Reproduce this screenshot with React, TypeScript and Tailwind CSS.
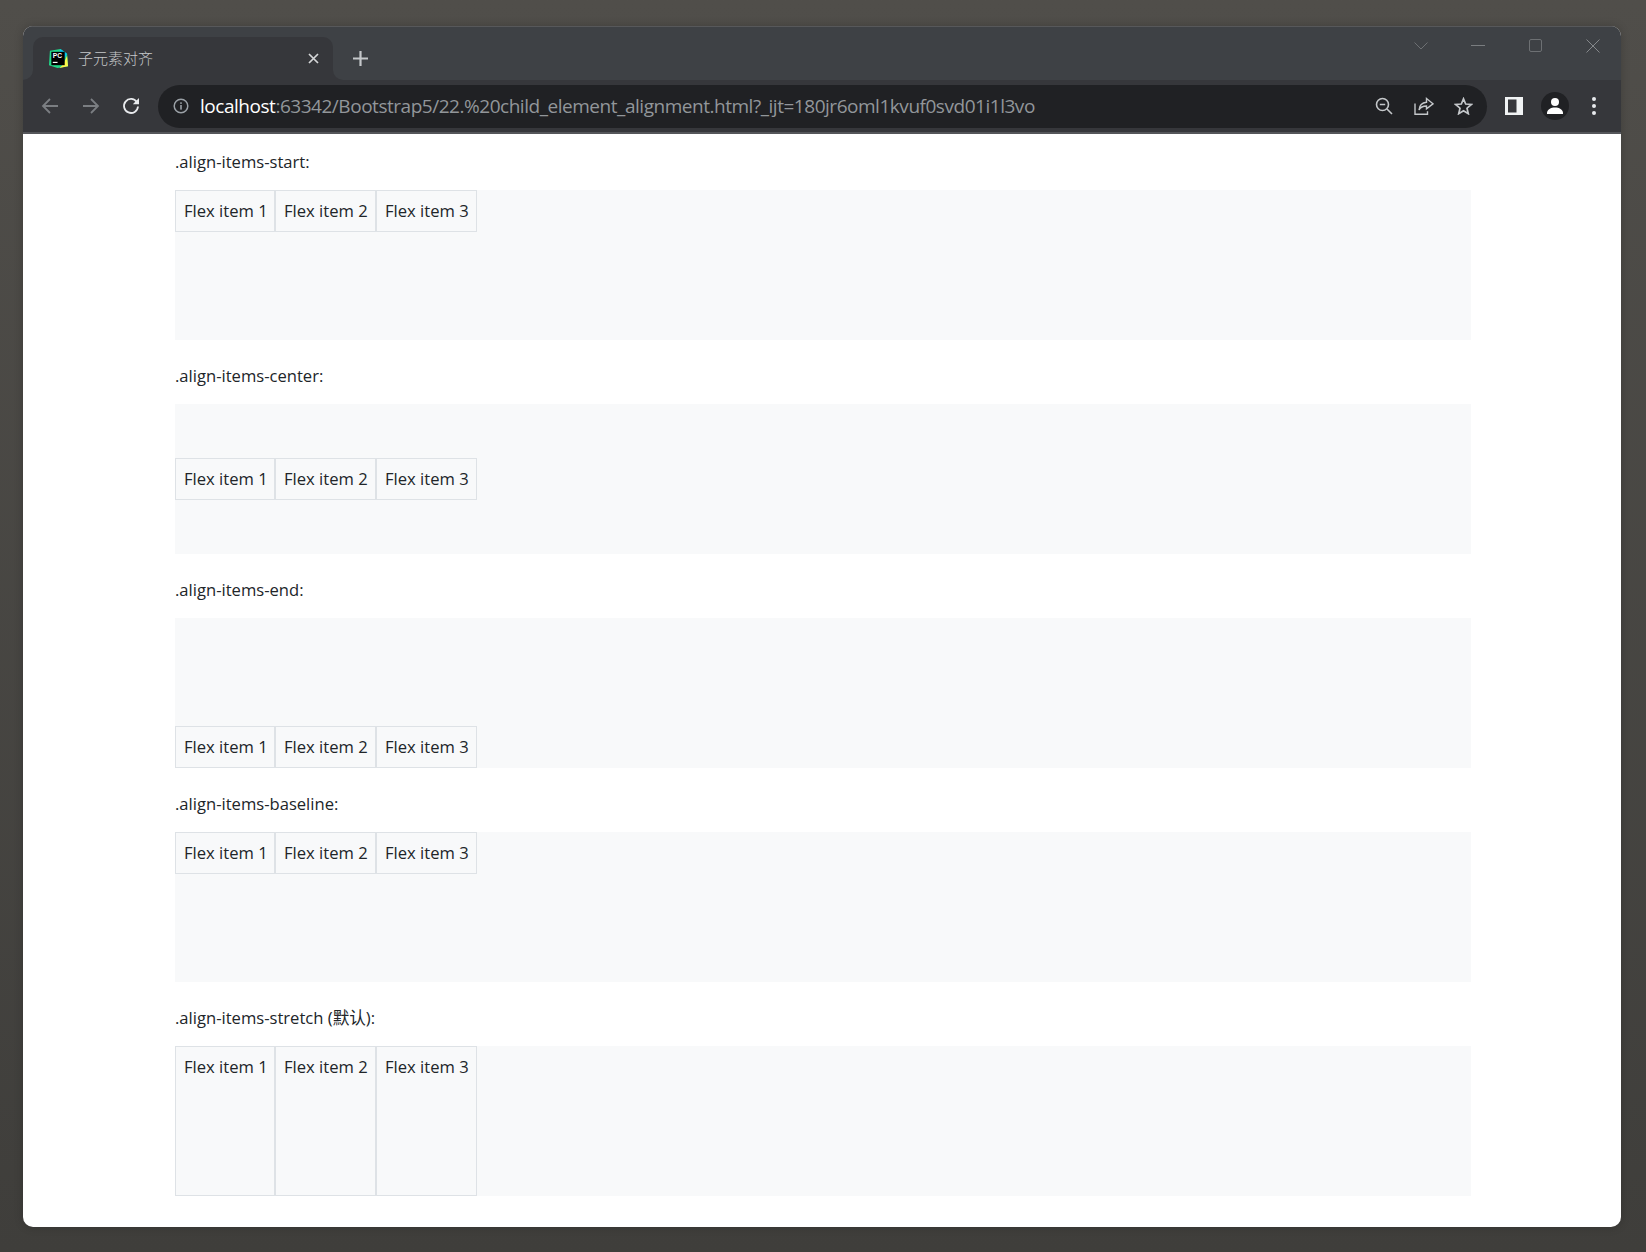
const items = ["Flex item 1", "Flex item 2", "Flex item 3"];

function FlexBox({ align }: { align: string }) {
  return (
    <div className={`mb-[23px] flex h-[150px] bg-[#f8f9fa] ${align}`}>
      <div className="w-[100px] border border-[#dee2e6] bg-[#f8f9fa] py-[7px] pl-[8px] leading-[26px] text-[#212529]">{items[0]}</div>
      <div className="w-[101px] border border-[#dee2e6] bg-[#f8f9fa] py-[7px] pl-[8px] leading-[26px] text-[#212529]">{items[1]}</div>
      <div className="w-[101px] border border-[#dee2e6] bg-[#f8f9fa] py-[7px] pl-[8px] leading-[26px] text-[#212529]">{items[2]}</div>
    </div>
  );
}

function Section({ label, align }: { label: string; align: string }) {
  return (
    <div>
      <p className="mb-[15px] h-[26px] leading-[26px] text-[#212529]">{label}</p>
      <FlexBox align={align} />
    </div>
  );
}

function PyCharmLogo() {
  return (
    <svg width="21" height="21" viewBox="0 0 22 22" className="shrink-0">
      <path d="M2 3 L13 1 L20 6 L21 19 L10 21 L1 18 Z" fill="#21d789" />
      <path d="M13 1 L20 6 L18 10 L12 5 Z" fill="#07c3f2" />
      <path d="M20 8 L21 19 L12 21 L16 17 Z" fill="#fcf84a" />
      <rect x="3.5" y="4" width="14" height="14" fill="#000" />
      <text x="5" y="10.5" fontSize="7" fontWeight="700" fill="#fff" fontFamily="'Liberation Sans', sans-serif">PC</text>
      <rect x="5" y="14.5" width="5" height="1.2" fill="#fff" />
    </svg>
  );
}

function Back() {
  return (
    <svg width="18" height="18" viewBox="0 0 18 18" fill="none" stroke="#7b7e82" strokeWidth="1.8">
      <path d="M17 9H2M9 2 2 9l7 7" />
    </svg>
  );
}

function Forward() {
  return (
    <svg width="18" height="18" viewBox="0 0 18 18" fill="none" stroke="#7b7e82" strokeWidth="1.8">
      <path d="M1 9h15M9 2l7 7-7 7" />
    </svg>
  );
}

function Reload() {
  return (
    <svg width="18" height="18" viewBox="0 0 18 18" fill="none">
      <path d="M14.8 5A7 7 0 1 0 16 9.5" stroke="#e8eaed" strokeWidth="1.8" />
      <path d="M17 1v6.2h-6.2z" fill="#e8eaed" />
    </svg>
  );
}

function Info() {
  return (
    <svg width="16" height="16" viewBox="0 0 16 16" fill="none">
      <circle cx="8" cy="8" r="6.8" stroke="#9aa0a6" strokeWidth="1.5" />
      <rect x="7.2" y="7" width="1.6" height="4.6" fill="#9aa0a6" />
      <rect x="7.2" y="4.3" width="1.6" height="1.6" fill="#9aa0a6" />
    </svg>
  );
}

function ZoomOut() {
  return (
    <svg width="18" height="18" viewBox="0 0 18 18" fill="none" stroke="#c4c7ca" strokeWidth="1.6">
      <circle cx="7.5" cy="7.5" r="6" />
      <path d="M4.8 7.5h5.4M12 12l5 5" />
    </svg>
  );
}

function Share() {
  return (
    <svg width="20" height="18" viewBox="0 0 20 18" fill="none" stroke="#c4c7ca" strokeWidth="1.4">
      <path d="M1 6.5v10.7h12.5v-3" />
      <path d="M12.5 1.5 19 6.8l-6.500 5V9C9 9 6.500 10 5 13c.4-4.500 3-7.300 7.500-7.700z" />
    </svg>
  );
}

function Star() {
  return (
    <svg width="19" height="18" viewBox="0 0 19 18" fill="none" stroke="#c4c7ca" strokeWidth="1.7">
      <path d="M9.500 1.800 11.700 7l5.600.5-4.300 3.700 1.300 5.500-4.800-2.900-4.800 2.900L6 11.200 1.700 7.500 7.300 7z" />
    </svg>
  );
}

function SidePanel() {
  return (
    <svg width="18" height="18" viewBox="0 0 18 18">
      <rect width="18" height="18" fill="#f1f3f4" />
      <rect x="3" y="2.500" width="8.500" height="13" fill="#36373b" />
    </svg>
  );
}

function Avatar() {
  return (
    <div className="flex size-[28px] items-center justify-center rounded-full bg-[#202124]">
      <svg width="18" height="18" viewBox="0 0 18 18" fill="#fff">
        <circle cx="9" cy="5" r="4" />
        <path d="M1 16c0-3.500 4-5.500 8-5.500s8 2 8 5.500v1H1z" />
      </svg>
    </div>
  );
}

function Dots() {
  return (
    <div className="flex flex-col gap-[3px]">
      <span className="size-[4px] rounded-full bg-[#e8eaed]" />
      <span className="size-[4px] rounded-full bg-[#e8eaed]" />
      <span className="size-[4px] rounded-full bg-[#e8eaed]" />
    </div>
  );
}

function TabStrip() {
  return (
    <div className="flex h-[54px] border-t border-[#57585a] bg-[#3e4145] pt-[10px] pl-[10px]">
      <div className="relative flex h-[43px] w-[300px] items-center rounded-t-[10px] bg-[#36373b] pr-[14px] pl-[15px]">
        <span className="absolute bottom-0 left-[-10px] size-[10px] bg-[#36373b]">
          <span className="block size-full rounded-br-[10px] bg-[#3e4145]" />
        </span>
        <span className="absolute right-[-10px] bottom-0 size-[10px] bg-[#36373b]">
          <span className="block size-full rounded-bl-[10px] bg-[#3e4145]" />
        </span>
        <PyCharmLogo />
        <span className="ml-[9px] flex-1 text-[15px] font-light text-[#c6c8ca]">子元素对齐</span>
        <svg width="11" height="11" viewBox="0 0 11 11" stroke="#d4d6d8" strokeWidth="1.7">
          <path d="M1 1l9 9M10 1l-9 9" />
        </svg>
      </div>
      <div className="ml-[20px] flex h-[43px] items-center">
        <svg width="15" height="15" viewBox="0 0 15 15" stroke="#c4c7ca" strokeWidth="2.200">
          <path d="M7.500 0v15M0 7.500h15" />
        </svg>
      </div>
      <div className="ml-auto flex h-[17px] items-start pt-[2px]">
        <svg width="14" height="8" viewBox="0 0 14 8" fill="none" stroke="#6d7073" className="mt-[3px]">
          <path d="M.5.500 7 7l6.500-6.500" />
        </svg>
        <span className="mt-[6px] ml-[43px] h-px w-[14px] bg-[#7a7d80]" />
        <span className="ml-[44px] size-[13px] rounded-[2px] border border-[#6d7073]" />
        <svg width="14" height="14" viewBox="0 0 14 14" stroke="#85888b" className="mr-[21px] ml-[44px]">
          <path d="M.5.500l13 13M13.500.500l-13 13" />
        </svg>
      </div>
    </div>
  );
}

function Toolbar() {
  return (
    <div className="flex h-[52px] items-center bg-[#36373b] pr-[20px] pl-[18px]">
      <Back />
      <span className="ml-[23px]"><Forward /></span>
      <span className="ml-[22px]"><Reload /></span>
      <div className="ml-[18px] flex h-[43px] w-[1329px] items-center rounded-full bg-[#202124] pr-[14px] pl-[15px]">
        <Info />
        <p className="ml-[11px] flex-1 text-[19px] tracking-[-0.47px] text-[#92969a]">
          <span className="text-white">localhost</span>:63342/Bootstrap5/22.%20child_element_alignment.html?_ijt=180jr6oml1kvuf0svd01i1l3vo
        </p>
        <ZoomOut />
        <span className="ml-[21px]"><Share /></span>
        <span className="ml-[20px]"><Star /></span>
      </div>
      <span className="ml-[18px]"><SidePanel /></span>
      <span className="ml-[18px]"><Avatar /></span>
      <span className="ml-[23px]"><Dots /></span>
    </div>
  );
}

export default function App() {
  return (
    <div
      className="h-[1252px] w-[1646px] overflow-hidden bg-gradient-to-b from-[#504e4a] to-[#3f3e3b] pt-[26px] pl-[23px] text-[16.600px]"
      style={{ fontFamily: "'Open Sans', 'Noto Sans CJK SC', sans-serif" }}
    >
      <div className="h-[1201px] w-[1598px] overflow-hidden rounded-[10px] bg-white shadow-[0_0_10px_rgba(0,0,0,0.2)]">
        <TabStrip />
        <Toolbar />
        <div className="h-[2px] bg-[#55565a]" />
        <div className="pt-[15px] pr-[150px] pl-[152px]">
          <Section label=".align-items-start:" align="items-start" />
          <Section label=".align-items-center:" align="items-center" />
          <Section label=".align-items-end:" align="items-end" />
          <Section label=".align-items-baseline:" align="items-baseline" />
          <Section label=".align-items-stretch (默认):" align="items-stretch" />
        </div>
      </div>
    </div>
  );
}
